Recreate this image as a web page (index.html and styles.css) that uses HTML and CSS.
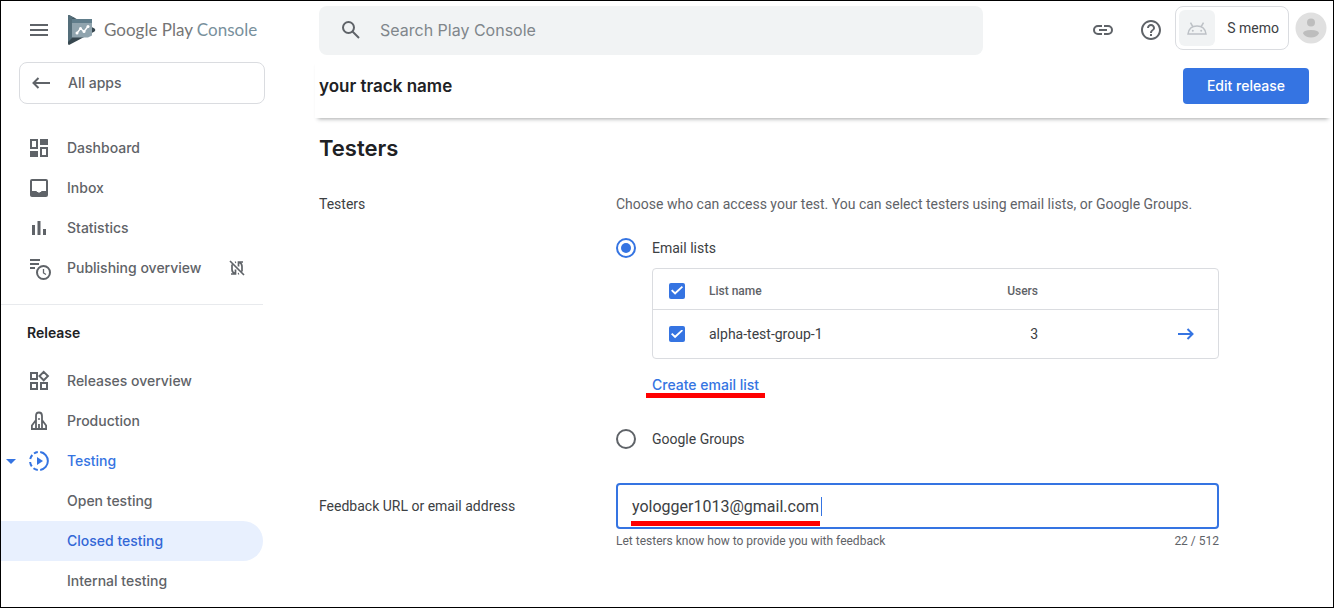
FILE: index.html
```html
<!DOCTYPE html>
<html lang="en">
<head>
<meta charset="utf-8">
<meta name="viewport" content="width=device-width, initial-scale=1">
<title>Closed testing - Google Play Console</title>
<link rel="stylesheet" href="styles.css">
</head>
<body>
<div class="app">
  <aside class="sidebar">
    <div class="brand-bar">
      <button class="icon-button" type="button" aria-label="Menu">
        <svg width="18" height="12" viewBox="0 0 18 12" fill="currentColor"><path d="M0 0h18v2H0zM0 5h18v2H0zM0 10h18v2H0z"/></svg>
      </button>
      <a class="brand" href="#">
        <svg width="28" height="30" viewBox="0 0 28 30">
          <path d="M0 1.500Q0-.6 2 .4L26.500 13.500Q28 15 26.500 16.500L2 29.600Q0 30.500 0 28.500Z" fill="#37474f"/>
          <path d="M0 1.500Q0-.6 2 .4L8 3.600H4V23L0 27Z" fill="#546e7a"/>
          <path d="M4 4H24V20.500L20 22.500H4Z" fill="#90a4ae"/>
          <path d="M4 4H24V8H4Z" fill="#607d8b"/>
          <path d="M9 18L12.500 13.500L16 16.500L20 11.500" fill="none" stroke="#fff" stroke-width="1.400"/>
          <g fill="#fff"><circle cx="9" cy="18" r="1.500"/><circle cx="12.500" cy="13.500" r="1.500"/><circle cx="16" cy="16.500" r="1.500"/><circle cx="20" cy="11.500" r="1.500"/></g>
        </svg>
        <span class="brand-name">Google Play <span class="brand-product">Console</span></span>
      </a>
    </div>
    <a class="all-apps" href="#">
      <svg width="18" height="12" viewBox="0 0 18 12" fill="none" stroke="currentColor" stroke-width="2"><path d="M18 6H1.500M6.500 1L1.500 6l5 5"/></svg>
      All apps
    </a>
    <nav class="nav" aria-label="Console">
      <a class="nav-item" href="#">
        <svg class="nav-icon" viewBox="0 0 24 24" fill="currentColor"><path d="M19 5v2h-4V5h4M9 5v6H5V5h4m10 8v6h-4v-6h4M9 17v2H5v-2h4M21 3h-8v6h8V3zM11 3H3v10h8V3zm10 8h-8v10h8V11zm-10 4H3v6h8v-6z"/><path d="M14 4h6v4h-6zM4 16h6v4H4z"/></svg>
        Dashboard
      </a>
      <a class="nav-item" href="#">
        <svg class="nav-icon" viewBox="0 0 24 24" fill="currentColor"><path d="M19 3H5a2 2 0 0 0-2 2v14c0 1.100.9 2 2 2h14a2 2 0 0 0 2-2V5a2 2 0 0 0-2-2zM5 5h14v10h-4q-1 0-1 1h-1l-1 1-1-1h-1q0-1-1-1H5z"/></svg>
        Inbox
      </a>
      <a class="nav-item" href="#">
        <svg class="nav-icon" viewBox="0 0 24 24" fill="currentColor"><path d="M5 9h3v10H5zM10.500 5h3v14h-3zM16 13h3v6h-3z"/></svg>
        Statistics
      </a>
      <a class="nav-item" href="#">
        <svg class="nav-icon" viewBox="0 0 24 24" fill="currentColor"><path d="M3 3h10v2H3zM3 7h9v2H3zM3 11h5v2H3z"/><circle cx="16.500" cy="16.500" r="6.500" fill="none" stroke="currentColor" stroke-width="2"/><path d="M16.500 13v4l2.500 1.500" fill="none" stroke="currentColor" stroke-width="1.300"/></svg>
        Publishing overview
        <svg class="nav-status" width="16" height="16" viewBox="0 0 16 16" fill="none" stroke="currentColor" stroke-width="1.700"><path d="M1 1l14 14M3 4.500v5q0 3 3 4M2 14h4.500V9.500M6 2.500l1-.4M13 11.500v-5q0-3-2.500-4M14 2H9.500v4.500M10 13.500l-1 .4"/></svg>
      </a>
    </nav>
    <hr class="divider">
    <h2 class="nav-heading">Release</h2>
    <nav class="nav" aria-label="Release">
      <a class="nav-item" href="#">
        <svg class="nav-icon" viewBox="0 0 24 24" fill="none" stroke="currentColor" stroke-width="2"><path d="M4 4h6v6H4zM4 14h6v6H4zM14 14h6v6h-6zM16.700 2.900l4.200 4.200-4.200 4.200-4.200-4.200z"/></svg>
        Releases overview
      </a>
      <a class="nav-item" href="#">
        <svg class="nav-icon" viewBox="0 0 24 24" fill="none" stroke="currentColor" stroke-width="1.800"><path d="M9 20V7q0-3.500 3-3.500T15 7v13M9 11l-4.100 5.500V20h14.200v-3.500L15 11M12 15v5"/><circle cx="12" cy="10" r="1" fill="currentColor" stroke="none"/></svg>
        Production
      </a>
      <a class="nav-item nav-item-open" href="#">
        <svg class="caret-down" width="10" height="5" viewBox="0 0 10 5" fill="currentColor"><path d="M0 0h10L5 5z"/></svg>
        <svg class="nav-icon" viewBox="0 0 24 24" fill="none" stroke="currentColor" stroke-width="2"><path d="M13.200 3.100A9 9 0 0 1 13.200 20.900M10.800 3.100A9 9 0 0 0 7 4.500M5.300 6A9 9 0 0 0 3.200 10M3.100 13A9 9 0 0 0 4.800 17.400M6.500 19.200A9 9 0 0 0 10.800 20.900"/><path d="M10 8v8l6-4z" fill="currentColor" stroke="none"/></svg>
        Testing
      </a>
      <a class="nav-item nav-child" href="#">Open testing</a>
      <a class="nav-item nav-child nav-current" href="#" aria-current="page">Closed testing</a>
      <a class="nav-item nav-child" href="#">Internal testing</a>
    </nav>
  </aside>

  <div class="content">
    <header class="topbar">
      <label class="search">
        <svg width="18" height="18" viewBox="0 0 18 18" fill="none" stroke="currentColor" stroke-width="2"><circle cx="6.500" cy="6.500" r="5.500"/><path d="M10.500 10.500l6.500 6.500"/></svg>
        <input class="search-input" type="search" placeholder="Search Play Console" aria-label="Search Play Console">
      </label>
      <div class="actions">
        <button class="icon-button" type="button" aria-label="Copy link">
          <svg width="20" height="10" viewBox="0 0 20 10" fill="none" stroke="currentColor" stroke-width="2"><path d="M9 1H5a4 4 0 0 0 0 8h4M11 1h4a4 4 0 0 1 0 8h-4M6 5h8"/></svg>
        </button>
        <button class="icon-button" type="button" aria-label="Help">
          <svg width="20" height="20" viewBox="2 2 20 20" fill="currentColor"><path d="M11 18h2v-2h-2v2zm1-16C6.480 2 2 6.480 2 12s4.480 10 10 10 10-4.480 10-10S17.520 2 12 2zm0 18c-4.410 0-8-3.590-8-8s3.590-8 8-8 8 3.590 8 8-3.590 8-8 8zm0-14c-2.210 0-4 1.790-4 4h2c0-1.100.9-2 2-2s2 .9 2 2c0 2-3 1.750-3 5h2c0-2.250 3-2.500 3-5 0-2.210-1.790-4-4-4z"/></svg>
        </button>
        <div class="account">
          <button class="app-chip" type="button">
            <span class="app-thumb">
              <svg width="20" height="13" viewBox="0 0 20 13" fill="none" stroke="currentColor" stroke-width="1.500"><path d="M1 12Q2 4 10 4t9 8zM6 5L3.500.7M14 5L16.500.7"/><g fill="currentColor" stroke="none"><circle cx="5.800" cy="8.800" r="1"/><circle cx="14.200" cy="8.800" r="1"/></g></svg>
            </span>
            S memo
          </button>
          <button class="avatar" type="button" aria-label="Account">
            <svg width="32" height="32" viewBox="0 0 32 32"><circle cx="16" cy="16" r="15.500" fill="#e0e0e0"/><circle cx="16" cy="10.500" r="4" fill="#bdbdbd"/><path d="M8 21.500q0-3.500 8-3.500t8 3.500q-2.500 4-8 4t-8-4z" fill="#bdbdbd"/></svg>
          </button>
        </div>
      </div>
    </header>
    <div class="trackbar">
      <span class="track-name">your track name</span>
      <button class="primary" type="button">Edit release</button>
    </div>
    <main class="form">
      <h1 class="title">Testers</h1>
      <section class="field-row">
        <h2 class="field-label">Testers</h2>
        <div class="field">
          <p class="hint">Choose who can access your test. You can select testers using email lists, or Google Groups.</p>
          <label class="choice"><input class="radio" type="radio" name="testers" checked>Email lists</label>
          <div class="lists">
            <table class="list-table">
              <thead>
                <tr>
                  <th class="cell-check"><input class="checkbox" type="checkbox" aria-label="Select all lists" checked></th>
                  <th class="cell-name">List name</th>
                  <th class="cell-users">Users</th>
                  <th class="cell-go"></th>
                </tr>
              </thead>
              <tbody>
                <tr>
                  <td class="cell-check"><input class="checkbox" type="checkbox" aria-label="Select alpha-test-group-1" checked></td>
                  <td class="cell-name">alpha-test-group-1</td>
                  <td class="cell-users">3</td>
                  <td class="cell-go"><a class="go" href="#" aria-label="Open list"><svg width="16" height="12" viewBox="0 0 16 12" fill="none" stroke="currentColor" stroke-width="2"><path d="M0 6h15M9.500 1l5 5-5 5"/></svg></a></td>
                </tr>
              </tbody>
            </table>
            <a class="create-link" href="#">Create email list<span class="mark mark-link"></span></a>
          </div>
          <label class="choice"><input class="radio" type="radio" name="testers">Google Groups</label>
        </div>
      </section>
      <section class="field-row feedback">
        <label class="field-label feedback-label" for="feedback">Feedback URL or email address</label>
        <div class="field">
          <div class="textbox">
            <input class="textbox-input" id="feedback" type="text" value="yologger1013@gmail.com" maxlength="512">
            <span class="cursor"></span>
            <span class="mark mark-input"></span>
          </div>
          <div class="help">
            <span>Let testers know how to provide you with feedback</span>
            <span>22 / 512</span>
          </div>
        </div>
      </section>
    </main>
  </div>
</div>
</body>
</html>
```
FILE: styles.css
```css
* {
  box-sizing: border-box;
}

body {
  margin: 0;
  font: 400 14px/20px Roboto, "Liberation Sans", sans-serif;
  color: #3c4043;
  background: #fff;
}

a {
  color: inherit;
  text-decoration: none;
}

button {
  font: inherit;
  color: inherit;
  background: none;
  border: 0;
  padding: 0;
  cursor: pointer;
}

svg {
  display: block;
  flex: none;
}

.app {
  display: grid;
  grid-template-columns: 318px minmax(0, 1fr);
  min-height: 100vh;
  border: 1px solid #000;
}

.sidebar {
  width: 264px;
  color: #5f6368;
}

.brand-bar {
  display: flex;
  align-items: center;
  gap: 20px;
  height: 57px;
  padding-left: 29px;
}

.icon-button {
  color: #5f6368;
}

.brand {
  display: flex;
  align-items: center;
  gap: 8px;
}

.brand-name {
  font-family: Lato, sans-serif;
  font-size: 17px;
  white-space: nowrap;
  color: #757575;
}

.brand-product {
  color: #78909c;
}

.all-apps {
  display: flex;
  align-items: center;
  gap: 18px;
  height: 42px;
  margin: 4px 0 24px 18px;
  padding-left: 12px;
  border: 1px solid #dadce0;
  border-radius: 8px;
  font: 500 14px/20px Inter, sans-serif;
}

.nav-item {
  display: flex;
  align-items: center;
  gap: 16px;
  height: 40px;
  padding-left: 26px;
  font: 500 14px/20px Inter, sans-serif;
  position: relative;
}

.nav-icon {
  width: 24px;
  height: 24px;
}

.nav-status {
  margin-left: 12px;
}

.nav-item-open {
  color: #3574e2;
}

.caret-down {
  position: absolute;
  left: 5px;
}

.nav-child {
  padding-left: 66px;
}

.nav-current {
  margin-right: 2px;
  border-radius: 0 20px 20px 0;
  background: #e8f0fe;
  color: #3367d6;
}

.divider {
  margin: 16px 2px 18px 0;
  border: 0;
  border-top: 1px solid #e8eaed;
}

.nav-heading {
  margin: 0 0 18px;
  padding-left: 26px;
  font: 600 14px/20px Inter, sans-serif;
  color: #202124;
}

.topbar {
  display: flex;
  align-items: center;
  gap: 24px;
  height: 58px;
  padding-right: 6px;
}

.search {
  display: flex;
  align-items: center;
  flex: 0 1 664px;
  gap: 20px;
  height: 49px;
  padding: 0 23px;
  border-radius: 8px;
  background: #f1f3f4;
  color: #5f6368;
}

.search-input {
  flex: 1;
  min-width: 0;
  padding: 0;
  border: 0;
  outline: 0;
  background: none;
  font: 400 16px/24px Inter, sans-serif;
}

.search-input::placeholder {
  color: #80868b;
}

.actions {
  display: flex;
  align-items: center;
  gap: 28px;
  margin-left: auto;
}

.account {
  display: flex;
  align-items: center;
  gap: 6px;
  margin-left: -14px;
  padding-bottom: 4px;
}

.app-chip {
  display: flex;
  align-items: center;
  gap: 12px;
  height: 44px;
  padding: 0 9px 0 3px;
  border: 1px solid #dadce0;
  border-radius: 8px;
}

.app-thumb {
  display: grid;
  place-items: center;
  width: 36px;
  height: 36px;
  border-radius: 6px;
  background: #f1f3f4;
  color: #bdc1c6;
}

.trackbar {
  display: flex;
  align-items: center;
  justify-content: space-between;
  height: 59px;
  margin: 0 2px 0 -4px;
  padding: 0 22px 6px 4px;
  box-shadow: 0 4px 4px -3px rgba(60, 64, 67, 0.45);
}

.track-name {
  font: 600 17px/24px Inter, sans-serif;
  color: #202124;
}

.primary {
  height: 36px;
  padding: 0 24px;
  border-radius: 4px;
  background: #3574e2;
  color: #fff;
  font: 500 14px/20px Inter, sans-serif;
}

.form {
  max-width: 900px;
}

.title {
  margin: 14px 0 30px;
  font: 600 22px/32px Inter, sans-serif;
  color: #202124;
}

.field-row {
  display: grid;
  grid-template-columns: 33% minmax(0, 1fr);
}

.field-label {
  margin: 0;
  font: inherit;
}

.hint {
  margin: 0 0 24px;
  color: #5f6368;
}

.choice {
  display: flex;
  align-items: center;
  gap: 16px;
}

.radio {
  appearance: none;
  display: grid;
  place-items: center;
  width: 20px;
  height: 20px;
  margin: 0;
  border: 2px solid #5f6368;
  border-radius: 50%;
}

.radio:checked {
  border-color: #3574e2;
}

.radio:checked::before {
  content: "";
  width: 10px;
  height: 10px;
  border-radius: 50%;
  background: #3574e2;
}

.lists {
  margin: 10px 0 34px 36px;
}

.list-table {
  width: 100%;
  table-layout: fixed;
  border: 1px solid #dadce0;
  border-radius: 4px;
  border-spacing: 0;
}

.list-table th {
  height: 41px;
  padding: 3px 0 0;
  border-bottom: 1px solid #dadce0;
  text-align: left;
  font-size: 12px;
  font-weight: 500;
  color: #5f6368;
}

.list-table td {
  height: 48px;
  padding: 0;
}

.list-table .cell-check {
  width: 56px;
  padding-left: 16px;
}

.list-table .cell-users {
  width: 96px;
  text-align: right;
}

.list-table .cell-go {
  width: 180px;
  padding-right: 24px;
}

.go {
  display: flex;
  justify-content: flex-end;
  color: #3574e2;
}

.checkbox {
  appearance: none;
  display: grid;
  place-items: center;
  width: 16px;
  height: 16px;
  margin: 0;
  border: 2px solid #5f6368;
  border-radius: 2px;
}

.checkbox:checked {
  border: 0;
  background: #3574e2;
}

.checkbox:checked::before {
  content: "";
  width: 12px;
  height: 9px;
  background: #fff;
  clip-path: polygon(0 52%, 11% 38%, 34% 68%, 90% 0, 100% 14%, 34% 96%);
}

.create-link {
  display: inline-block;
  position: relative;
  margin-top: 16px;
  font: 500 14px/20px Inter, sans-serif;
  color: #3574e2;
}

.mark {
  position: absolute;
  height: 5px;
  background: #f00;
}

.mark-link {
  left: -6px;
  right: -6px;
  bottom: -3px;
}

.feedback {
  margin-top: 34px;
}

.feedback-label {
  padding-top: 13px;
}

.textbox {
  position: relative;
}

.textbox-input {
  display: block;
  width: 100%;
  height: 46px;
  padding: 0 14px;
  border: 2px solid #3574e2;
  border-radius: 4px;
  outline: 0;
  background: #fff;
  color: #3c4043;
  font: 400 16px/24px Roboto, sans-serif;
}

.cursor {
  position: absolute;
  left: 205px;
  top: 14px;
  width: 1px;
  height: 19px;
  background: #3574e2;
}

.mark-input {
  left: 15px;
  bottom: 3px;
  width: 189px;
}

.help {
  display: flex;
  justify-content: space-between;
  margin-top: 4px;
  font-size: 12px;
  line-height: 16px;
  color: #5f6368;
}
```
